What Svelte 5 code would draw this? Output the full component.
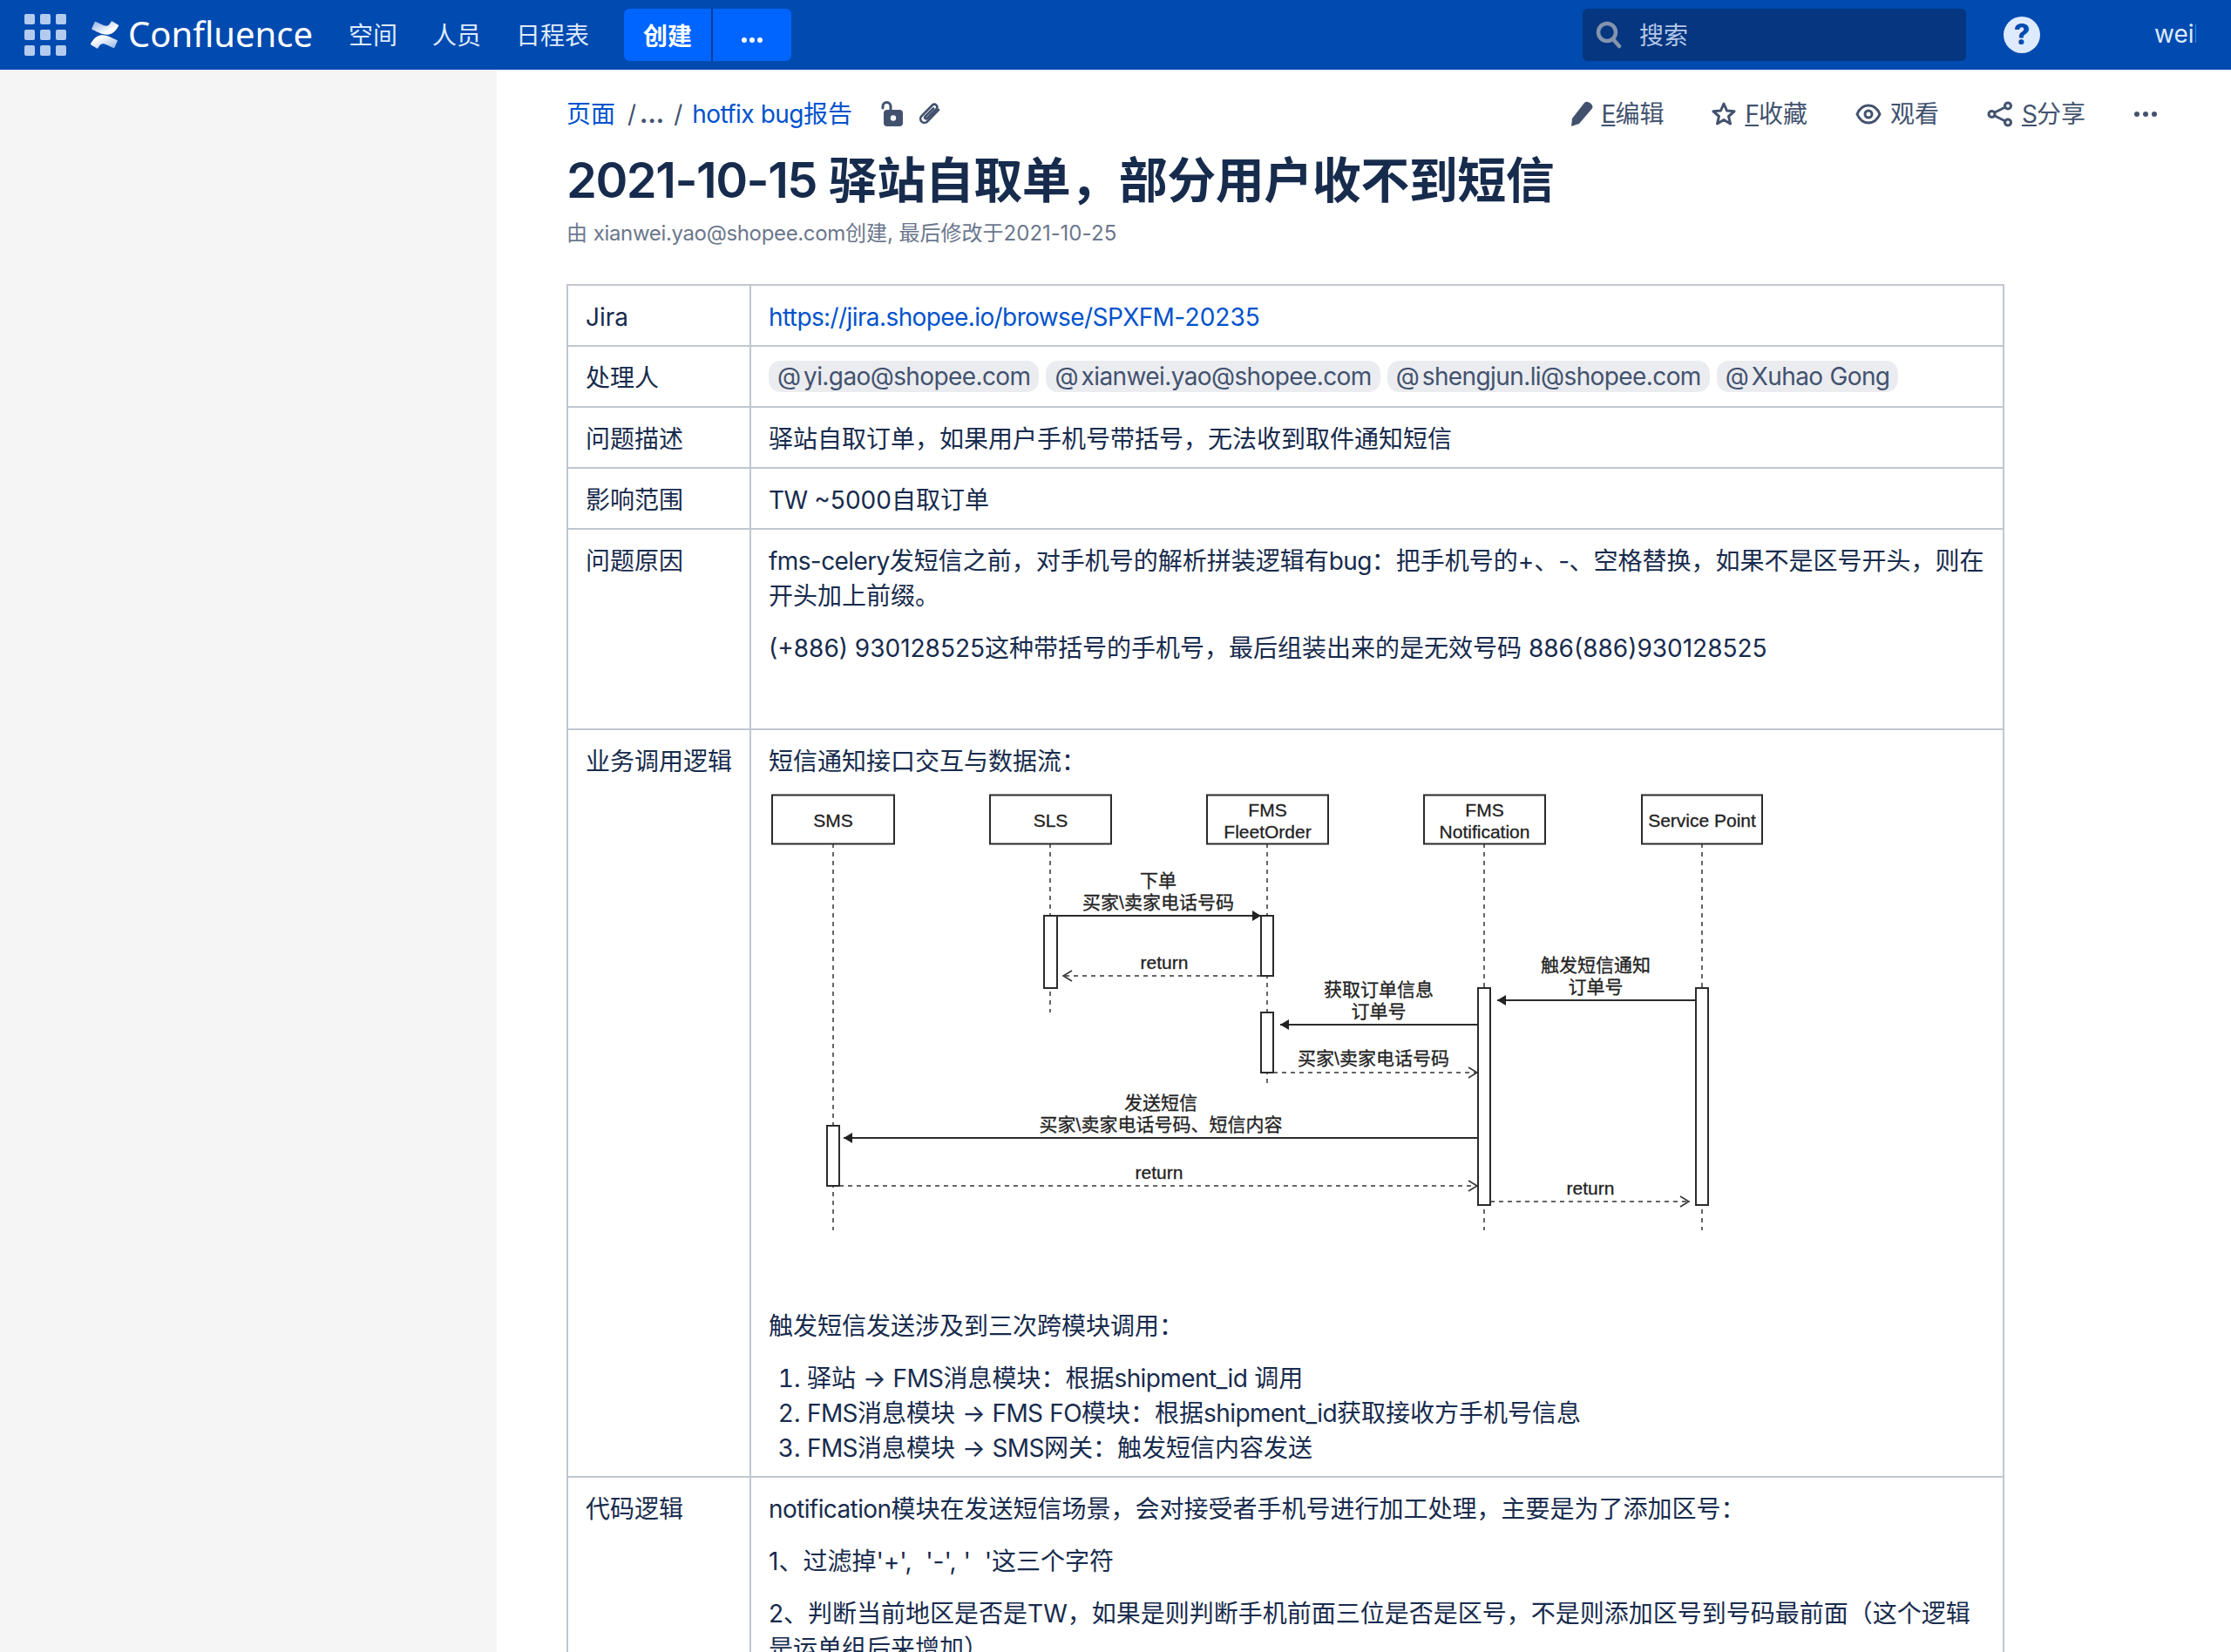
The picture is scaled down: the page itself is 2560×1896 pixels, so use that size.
<script>
	const navLinks = ['空间', '人员', '日程表'];
	const mentions = ['yi.gao@shopee.com', 'xianwei.yao@shopee.com', 'shengjun.li@shopee.com', 'Xuhao Gong'];

	// sequence diagram, coordinates are page pixels (viewBox matches)
	const boxes = [
		{ x: 886, w: 140, lines: ['SMS'] },
		{ x: 1136, w: 139, lines: ['SLS'] },
		{ x: 1385, w: 139, lines: ['FMS', 'FleetOrder'] },
		{ x: 1634, w: 139, lines: ['FMS', 'Notification'] },
		{ x: 1884, w: 138, lines: ['Service Point'] }
	];
	const lifelines = [
		{ x: 956, end: 1412 },
		{ x: 1205, end: 1162 },
		{ x: 1454, end: 1246 },
		{ x: 1703, end: 1412 },
		{ x: 1953, end: 1412 }
	];
	const bars = [
		{ x: 1198, y: 1051, w: 15, h: 83 },
		{ x: 1447, y: 1051, w: 14, h: 69 },
		{ x: 1447, y: 1162, w: 14, h: 69 },
		{ x: 949, y: 1292, w: 14, h: 69 },
		{ x: 1696, y: 1134, w: 14, h: 249 },
		{ x: 1946, y: 1134, w: 14, h: 249 }
	];
	const messages = [
		{ from: 1213, to: 1447, y: 1051 },
		{ from: 1447, to: 1220, y: 1120, dashed: true },
		{ from: 1696, to: 1469, y: 1176 },
		{ from: 1461, to: 1695, y: 1231, dashed: true },
		{ from: 1946, to: 1718, y: 1148 },
		{ from: 1696, to: 968, y: 1306 },
		{ from: 963, to: 1695, y: 1361, dashed: true },
		{ from: 1710, to: 1938, y: 1379, dashed: true }
	];
	const labels = [
		{ x: 1329, y: 1011, t: '下单' },
		{ x: 1329, y: 1036, t: '买家\\卖家电话号码' },
		{ x: 1336, y: 1105, t: 'return' },
		{ x: 1582, y: 1136, t: '获取订单信息' },
		{ x: 1582, y: 1161, t: '订单号' },
		{ x: 1576, y: 1215, t: '买家\\卖家电话号码' },
		{ x: 1831, y: 1108, t: '触发短信通知' },
		{ x: 1831, y: 1133, t: '订单号' },
		{ x: 1332, y: 1266, t: '发送短信' },
		{ x: 1332, y: 1291, t: '买家\\卖家电话号码、短信内容' },
		{ x: 1330, y: 1346, t: 'return' },
		{ x: 1825, y: 1364, t: 'return' }
	];

	const head = (m) => {
		const d = m.to > m.from ? -1 : 1;
		return `${m.to + d * 10},${m.y - 6} ${m.to},${m.y} ${m.to + d * 10},${m.y + 6}`;
	};

	// latin runs are set a little tighter than the CJK around them
	const runs = (s) => s.split(/([A-Za-z_.@:/-]+)/).map((t, i) => ({ t, en: i % 2 === 1 }));
</script>

{#snippet txt(s)}{#each runs(s) as r}{#if r.en}<span class="en">{r.t}</span>{:else}{r.t}{/if}{/each}{/snippet}

<div class="page">
	<header class="nav">
		<div class="apps">
			{#each Array(9) as _}
				<span></span>
			{/each}
		</div>
		<div class="logo">
			<svg width="32" height="32" viewBox="0 0 24 24">
				<defs>
					<linearGradient id="lgA" x1="1" y1="1" x2="0" y2="0">
						<stop offset="0" stop-color="#8fb0e4" />
						<stop offset="0.7" stop-color="#fff" />
					</linearGradient>
					<linearGradient id="lgB" x1="0" y1="0" x2="1" y2="1">
						<stop offset="0" stop-color="#8fb0e4" />
						<stop offset="0.7" stop-color="#fff" />
					</linearGradient>
				</defs>
				<path fill="url(#lgA)" d="M.87 18.257c-.248.382-.53.875-.763 1.245a.764.764 0 0 0 .255 1.04l4.965 3.054a.764.764 0 0 0 1.058-.26c.199-.332.454-.763.733-1.221 1.967-3.247 3.945-2.853 7.508-1.146l4.957 2.337a.764.764 0 0 0 1.028-.382l2.364-5.346a.764.764 0 0 0-.382-1 599.851 599.851 0 0 1-4.965-2.361C10.911 10.883 5.16 11.1.87 18.257z" />
				<path fill="url(#lgB)" d="M23.131 5.743c.248-.382.53-.875.763-1.245a.764.764 0 0 0-.255-1.04L18.674.404a.764.764 0 0 0-1.058.26c-.199.332-.454.763-.733 1.221-1.967 3.247-3.945 2.853-7.508 1.146L4.433.694a.764.764 0 0 0-1.028.382L1.041 6.422a.764.764 0 0 0 .382 1c1.04.49 3.11 1.456 4.965 2.361 6.7 3.246 12.452 3.028 16.743-4.04z" />
			</svg>
			<span class="wordmark">Confluence</span>
		</div>
		<nav class="links">
			{#each navLinks as link}
				<a href="#top">{link}</a>
			{/each}
		</nav>
		<div class="create">
			<button class="create-main">创建</button>
			<button class="create-more" aria-label="more">
				<svg width="26" height="8" viewBox="0 0 26 8" fill="#fff"><circle cx="4" cy="4" r="3" /><circle cx="13" cy="4" r="3" /><circle cx="22" cy="4" r="3" /></svg>
			</button>
		</div>
		<div class="search">
			<svg width="30" height="32" viewBox="0 0 30 32" fill="none" stroke="#8494ad" stroke-width="4.5">
				<circle cx="13" cy="13" r="10" />
				<path d="M20 21l7 8" stroke-linecap="round" />
			</svg>
			<span>搜索</span>
		</div>
		<div class="help">?</div>
		<div class="user">weil</div>
	</header>

	<div class="body">
		<aside class="sidebar"></aside>
		<main class="content">
			<div class="topbar">
				<div class="crumbs">
					<a href="#top">页面</a>
					<span class="sep">/</span><span class="dots">...</span>
					<span class="sep second">/</span>
					<a href="#top">{@render txt('hotfix bug报告')}</a>
					<svg class="lock" width="26" height="30" viewBox="0 0 26 30">
						<path d="M3 8V6a4.5 4.5 0 0 1 9 0v6" fill="none" stroke="#42526e" stroke-width="3" stroke-linecap="round" />
						<rect x="4" y="10" width="22" height="19" rx="4" fill="#42526e" />
						<circle cx="15" cy="19.5" r="3.2" fill="#fff" />
					</svg>
					<svg class="clip" width="26" height="28" viewBox="0 0 26 28" fill="none" stroke="#42526e" stroke-width="2.6" stroke-linecap="round">
						<path d="M24 9L11 22.500a4.500 4.500 0 0 1-6.500-6.300L17 3.500a3.200 3.200 0 0 1 4.600 4.400L10.500 19a1.500 1.500 0 0 1-2.100-2.100L18 7.500" />
					</svg>
				</div>
				<div class="actions">
					<a href="#top">
						<svg width="26" height="30" viewBox="0 0 26 30" fill="#42526e"><path d="M1 29l1-9L16 2q3-2.500 7 .5t1.500 6.500L10 26z" /></svg>
						<span><u>E</u>编辑</span>
					</a>
					<a href="#top">
						<svg width="28" height="30" viewBox="0 0 28 30" fill="none" stroke="#42526e" stroke-width="3" stroke-linejoin="round"><path d="M14 3l3.500 8 8.500.8-6.500 5.700 2 8.500-7.500-4.500-7.500 4.500 2-8.500L2 11.800l8.500-.8z" /></svg>
						<span><u>F</u>收藏</span>
					</a>
					<a href="#top">
						<svg width="30" height="28" viewBox="0 0 30 28" fill="none" stroke="#42526e" stroke-width="3"><path d="M2 14C5 7 10 4 15 4s10 3 13 10c-3 7-8 10-13 10S5 21 2 14z" /><circle cx="15" cy="14" r="4" /></svg>
						<span>观看</span>
					</a>
					<a href="#top">
						<svg width="30" height="30" viewBox="0 0 30 30" fill="none" stroke="#42526e" stroke-width="3"><circle cx="5.500" cy="15" r="3.500" /><circle cx="24" cy="5.500" r="3.500" /><circle cx="24" cy="24.500" r="3.500" /><path d="M9 13L21 7M9 17l12 6" /></svg>
						<span><u>S</u>分享</span>
					</a>
					<svg class="more" width="28" height="8" viewBox="0 0 28 8" fill="#42526e"><circle cx="4" cy="4" r="3" /><circle cx="14" cy="4" r="3" /><circle cx="24" cy="4" r="3" /></svg>
				</div>
			</div>

			<h1><span class="date">2021-10-15</span> 驿站自取单，部分用户收不到短信</h1>
			<div class="byline">{@render txt('由 xianwei.yao@shopee.com创建, 最后修改于2021-10-25')}</div>

			<table>
				<tbody>
					<tr>
						<th>Jira</th>
						<td><a href="#top">{@render txt('https://jira.shopee.io/browse/SPXFM-20235')}</a></td>
					</tr>
					<tr>
						<th>处理人</th>
						<td>
							{#each mentions as m}
								<span class="mention"><i>@</i>{@render txt(m)}</span>
							{/each}
						</td>
					</tr>
					<tr>
						<th>问题描述</th>
						<td>驿站自取订单，如果用户手机号带括号，无法收到取件通知短信</td>
					</tr>
					<tr>
						<th>影响范围</th>
						<td>{@render txt('TW ~5000自取订单')}</td>
					</tr>
					<tr>
						<th>问题原因</th>
						<td>
							<p>{@render txt('fms-celery发短信之前，对手机号的解析拼装逻辑有bug：把手机号的+、-、空格替换，如果不是区号开头，则在开头加上前缀。')}</p>
							<p>(+886) 930128525这种带括号的手机号，最后组装出来的是无效号码 886(886)930128525</p>
							<p><br /></p>
						</td>
					</tr>
					<tr>
						<th>业务调用逻辑</th>
						<td>
							<p>短信通知接口交互与数据流：</p>
							<svg class="diagram" width="1160" height="582" viewBox="882 900 1160 582">
								{#each lifelines as l}
									<line x1={l.x} x2={l.x} y1="968" y2={l.end} class="dash" />
								{/each}
								{#each boxes as b}
									<rect x={b.x} y="912.500" width={b.w} height="56" class="shape" />
									{#each b.lines as line, i}
										<text x={b.x + b.w / 2} y={b.lines.length === 1 ? 949 : 937 + i * 25} class="box-text">{line}</text>
									{/each}
								{/each}
								{#each bars as bar}
									<rect x={bar.x} y={bar.y} width={bar.w} height={bar.h} class="shape" />
								{/each}
								{#each messages as m}
									<line x1={m.from} x2={m.to} y1={m.y} y2={m.y} class={m.dashed ? 'dash' : 'solid'} />
									{#if m.dashed}
										<polyline points={head(m)} class="open" />
									{:else}
										<polygon points={head(m)} class="filled" />
									{/if}
								{/each}
								{#each labels as l}
									<text x={l.x} y={l.y + 7} class="label">{l.t}</text>
								{/each}
							</svg>
							<p>触发短信发送涉及到三次跨模块调用：</p>
							<ol>
								<li>{@render txt('驿站 → FMS消息模块：根据shipment_id 调用')}</li>
								<li>{@render txt('FMS消息模块 → FMS FO模块：根据shipment_id获取接收方手机号信息')}</li>
								<li>{@render txt('FMS消息模块 → SMS网关：触发短信内容发送')}</li>
							</ol>
						</td>
					</tr>
					<tr>
						<th>代码逻辑</th>
						<td>
							<p>{@render txt('notification模块在发送短信场景，会对接受者手机号进行加工处理，主要是为了添加区号：')}</p>
							<p>1、过滤掉'+',&nbsp; '-', '&nbsp; '这三个字符</p>
							<p>2、判断当前地区是否是TW，如果是则判断手机前面三位是否是区号，不是则添加区号到号码最前面（这个逻辑是运单组后来增加）</p>
						</td>
					</tr>
				</tbody>
			</table>
		</main>
	</div>
</div>

<style>
	:global(body) {
		margin: 0;
		background: #fff;
	}

	.page {
		height: 1896px;
		overflow: hidden;
		font-family: Inter, 'Noto Sans CJK SC', sans-serif;
		font-size: 28px;
		line-height: 40px;
		color: #172b4d;
	}

	.en {
		letter-spacing: -0.6px;
	}

	a {
		color: #0052cc;
		text-decoration: none;
	}

	/* top bar */
	.nav {
		height: 80px;
		background: #004ab0;
		display: flex;
		align-items: center;
		padding-left: 28px;
		color: #deebff;
	}

	.apps {
		display: grid;
		grid-template-columns: repeat(3, 12px);
		gap: 6px;
	}

	.apps span {
		height: 12px;
		border-radius: 2px;
		background: #b3cbef;
	}

	.logo {
		display: flex;
		align-items: center;
		gap: 12px;
		margin-left: 28px;
	}

	.wordmark {
		font-family: 'Noto Sans', sans-serif;
		font-size: 40px;
		color: #fff;
		width: 212px;
		margin: -3px 0 0 -1px;
	}

	.links {
		display: flex;
		gap: 40px;
		margin-left: 41px;
	}

	.links a {
		color: #deebff;
		padding-top: 2px;
	}

	.create {
		display: flex;
		gap: 2px;
		margin-left: 40px;
		height: 60px;
		background: #003c96;
		border-radius: 6px;
	}

	.create button {
		border: 0;
		background: #0065ff;
		color: #fff;
		font: 600 28px Inter, 'Noto Sans CJK SC', sans-serif;
		padding: 0;
	}

	.create-main {
		width: 100px;
		border-radius: 6px 0 0 6px;
	}

	.create-more {
		width: 90px;
		border-radius: 0 6px 6px 0;
	}

	.search {
		width: 440px;
		height: 60px;
		margin-left: auto;
		box-sizing: border-box;
		padding-left: 15px;
		display: flex;
		align-items: center;
		gap: 20px;
		background: #05367f;
		border-radius: 6px;
		color: #b3c6e6;
	}

	.search span {
		padding-top: 2px;
	}

	.help {
		width: 42px;
		height: 42px;
		margin-left: 43px;
		border-radius: 50%;
		background: #deebff;
		color: #004ab0;
		font-size: 32px;
		font-weight: 800;
		line-height: 42px;
		text-align: center;
	}

	.user {
		width: 48px;
		margin: -2px 40px 0 131px;
		overflow: hidden;
		white-space: nowrap;
		color: #deebff;
	}

	/* page body */
	.body {
		display: flex;
		min-height: 1816px;
	}

	.sidebar {
		flex: 0 0 570px;
		background: #f5f5f6;
	}

	.content {
		flex: 1;
		padding: 31px 80px 0;
		min-width: 0;
	}

	.topbar {
		display: flex;
		justify-content: space-between;
		align-items: center;
		height: 40px;
	}

	.crumbs {
		display: flex;
		align-items: center;
		color: #42526e;
	}

	.sep {
		margin-left: 14px;
	}

	.sep.second {
		margin-left: 11px;
	}

	.dots {
		margin-left: 4px;
		font-weight: 700;
	}

	.crumbs .sep + a {
		margin-left: 11px;
	}

	.lock {
		margin-left: 32px;
	}

	.clip {
		margin-left: 17px;
	}

	.actions {
		display: flex;
		align-items: center;
		color: #42526e;
	}

	.actions a {
		display: flex;
		align-items: center;
		gap: 10px;
		color: #42526e;
		margin-right: 55px;
	}

	.actions u {
		letter-spacing: -1px;
	}

	.actions .more {
		margin-left: 0;
		margin-right: 4px;
	}

	h1 {
		margin: 22px 0 0;
		font-size: 56px;
		line-height: 68px;
		font-weight: 600;
		letter-spacing: -0.5px;
		white-space: nowrap;
	}

	.date {
		letter-spacing: -1.5px;
	}

	.byline {
		margin: 11px 0 42px;
		font-size: 24px;
		line-height: 32px;
		color: #6b778c;
	}

	.byline .en {
		letter-spacing: -0.35px;
	}

	table {
		width: 1650px;
		border-collapse: collapse;
		table-layout: fixed;
	}

	th,
	td {
		border: 2px solid #c1c7d0;
		padding: 16px 20px 12px;
		text-align: left;
		vertical-align: top;
		font-weight: 400;
	}

	th {
		width: 168px;
	}

	p {
		margin: 20px 0 0;
	}

	p:first-child {
		margin-top: 0;
	}

	.mention {
		display: inline-block;
		height: 36px;
		line-height: 36px;
		padding: 0 10px;
		margin-right: 8px;
		border-radius: 14px;
		background: #ebecf0;
		color: #42526e;
		vertical-align: 2px;
	}

	.mention i {
		font-style: normal;
		margin-right: 3px;
	}

	.diagram {
		display: block;
		margin: 6px 0 20px;
	}

	.diagram text {
		font-family: 'Liberation Sans', 'Noto Sans CJK SC', sans-serif;
		font-size: 21px;
		text-anchor: middle;
		fill: #222;
		stroke: #222;
		stroke-width: 0.3;
	}

	.shape {
		fill: #fff;
		stroke: #2b2b2b;
		stroke-width: 2;
	}

	.solid {
		stroke: #2b2b2b;
		stroke-width: 2;
	}

	.dash {
		stroke: #333;
		stroke-width: 1.5;
		stroke-dasharray: 5 5;
	}

	.filled {
		fill: #222;
	}

	.open {
		fill: none;
		stroke: #333;
		stroke-width: 1.5;
	}

	ol {
		margin: 20px 0 0;
		padding-left: 44px;
	}
</style>
